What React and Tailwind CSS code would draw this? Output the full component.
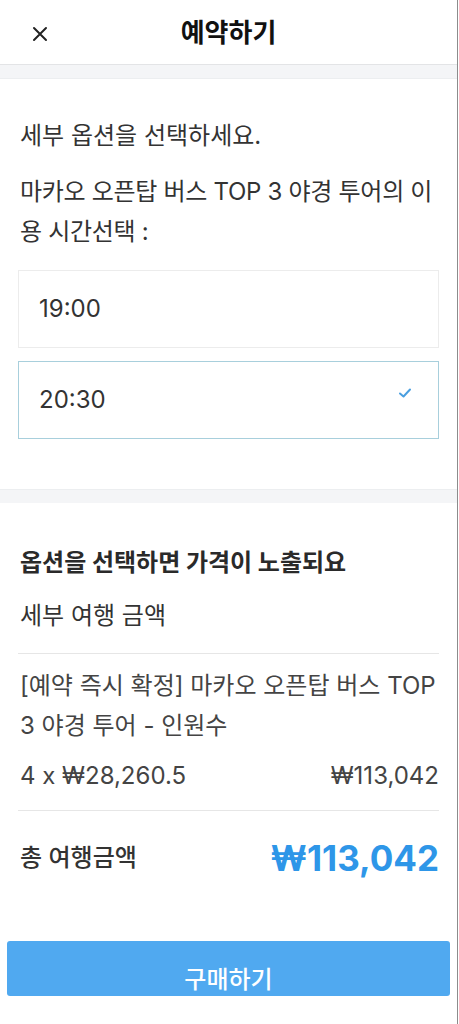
import React from "react";

export default function App() {
  const font = { fontFamily: 'Inter, "Noto Sans CJK KR", "Noto Sans", sans-serif' };
  return (
    <div className="w-[458px] min-h-[1024px] bg-white border-r border-[#8c8c8c] text-[#333333]" style={font}>
      {/* Header */}
      <div className="relative h-[65px] flex items-center justify-center border-b border-[#e3e4e6]">
        <button className="absolute left-[31px] top-[25px] w-[18px] h-[18px] flex items-center justify-center">
          <svg width="16" height="16" viewBox="0 0 16 16" fill="none" stroke="#222" strokeWidth="2" strokeLinecap="round">
            <path d="M2 2 L14 14 M14 2 L2 14" />
          </svg>
        </button>
        <h1 className="text-[26px] font-bold text-[#111]">예약하기</h1>
      </div>
      <div className="h-[14px] bg-[#f4f5f7] border-b border-[#eceef0]" />

      {/* Options section */}
      <div className="px-[18px] pt-[37px] pb-[50px]">
        <p className="pl-[2px] text-[24px] leading-[40px]">세부 옵션을 선택하세요.</p>
        <p className="mt-[16px] pl-[2px] -mr-[6px] text-[24px] leading-[40px] tracking-[-0.3px] break-all">
          마카오 오픈탑 버스 TOP 3 야경 투어의 이용 시간선택 :
        </p>
        <div className="mt-[18px] flex flex-col gap-[13px]">
          <div className="h-[78px] border border-[#ececec] flex items-center px-[20px] text-[24px]">19:00</div>
          <div className="h-[78px] border border-[#a8cfdc] flex items-center justify-between pl-[20px] pr-[26px] text-[24px]">
            <span>20:30</span>
            <svg width="14" height="12" viewBox="0 0 14 12" fill="none" stroke="#4a9fe0" strokeWidth="2" strokeLinecap="round" strokeLinejoin="round" className="mb-[14px]">
              <path d="M2 6.5 L5.5 9.5 L12 2.5" />
            </svg>
          </div>
        </div>
      </div>
      <div className="h-[14px] bg-[#f4f5f7] border-t border-[#eceef0]" />

      {/* Price section */}
      <div className="px-[18px] pt-[40px]">
        <p className="pl-[2px] text-[24px] leading-[40px] font-bold text-[#2a2a2a]">옵션을 선택하면 가격이 노출되요</p>
        <p className="mt-[13px] pl-[2px] text-[24px] leading-[40px]">세부 여행 금액</p>
        <div className="mt-[17px] border-t border-[#e6e6e6]" />
        <p className="mt-[12px] pl-[2px] text-[24px] leading-[40px] text-[#444]">
          [예약 즉시 확정] 마카오 오픈탑 버스 TOP 3 야경 투어 - 인원수
        </p>
        <div className="mt-[10px] pl-[2px] flex justify-between text-[24px] leading-[40px] text-[#444]">
          <span>4 x ₩28,260.5</span>
          <span>₩113,042</span>
        </div>
        <div className="mt-[14px] border-t border-[#e6e6e6]" />
        <div className="mt-[22px] h-[50px] pl-[2px] flex items-center justify-between">
          <span className="text-[24px] font-medium text-[#333]">총 여행금액</span>
          <span className="text-[35px] font-bold text-[#2e96e8]">₩113,042</span>
        </div>
      </div>

      {/* Button */}
      <div className="px-[7px] mt-[58px]">
        <button className="w-full h-[55px] rounded-[3px] bg-[#50a9f0] text-white text-[24px] leading-[32px] font-medium flex items-end justify-center">
          구매하기
        </button>
      </div>
    </div>
  );
}
